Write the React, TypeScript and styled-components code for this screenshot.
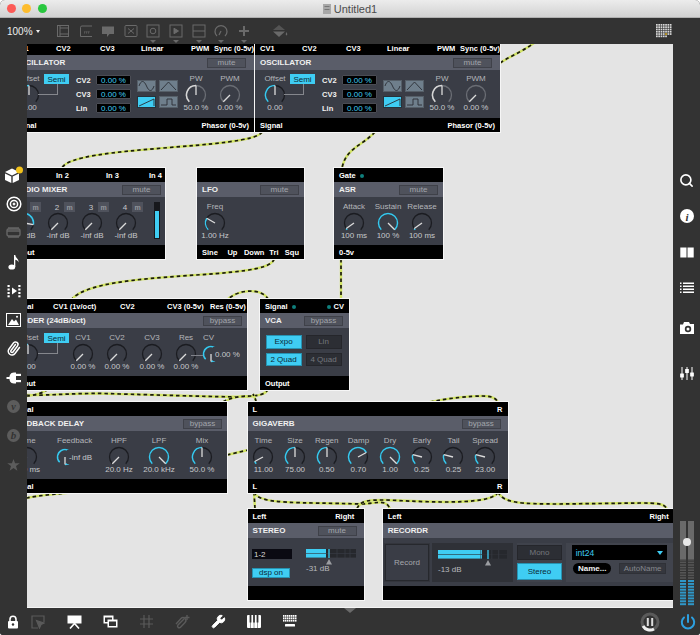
import React from "react";
import styled, { createGlobalStyle } from "styled-components";
import { Paperclip, Search, Wrench } from "lucide-react";

const GlobalStyle = createGlobalStyle`
  html, body { margin: 0; padding: 0; background: #fff; }
  body { font-family: "Liberation Sans", Arial, sans-serif; }
  * { box-sizing: border-box; }
`;

const CYAN = "#3fcdf3";
const ARC = "#38c8ee";

const Window = styled.div`
  width: 700px;
  height: 635px;
  display: flex;
  flex-direction: column;
  overflow: hidden;
  border-radius: 5px 5px 3px 3px;
  background: #333;
`;

const TitleBar = styled.div`
  height: 18px;
  flex-shrink: 0;
  display: grid;
  grid-template-columns: 1fr auto 1fr;
  align-items: center;
  background: linear-gradient(#ececec, #d2d2d2);
  border-bottom: 1px solid #b0b0b0;
`;

const Lights = styled.div`
  display: flex;
  gap: 6.5px;
  padding-left: 6.5px;
`;

const Light = styled.span<{ $c: string }>`
  width: 9px;
  height: 9px;
  border-radius: 50%;
  background: ${({ $c }) => $c};
`;

const DocName = styled.div`
  display: flex;
  align-items: center;
  gap: 3px;
  font-size: 11px;
  color: #4c4c4c;
`;

const Toolbar = styled.div`
  height: 26px;
  flex-shrink: 0;
  display: flex;
  align-items: center;
  padding-right: 27px;
  background: #333;
`;

const Zoom = styled.div`
  width: 55px;
  padding-left: 7px;
  font-size: 10px;
  color: #eee;
  display: flex;
  gap: 3px;
  align-items: center;
`;

const Caret = styled.span`
  width: 0;
  height: 0;
  border-left: 2.5px solid transparent;
  border-right: 2.5px solid transparent;
  border-top: 3.5px solid #eee;
`;

const Tool = styled.div<{ $ml?: number }>`
  width: 16px;
  margin-right: 6.6px;
  margin-left: ${({ $ml }) => $ml ?? 0}px;
  height: 16px;
  display: flex;
  align-items: center;
  justify-content: center;
`;

const MatrixTool = styled.div`
  margin-left: auto;
  display: flex;
`;

const Middle = styled.div`
  flex: 1;
  display: flex;
  min-height: 0;
`;

const LeftBar = styled.div`
  width: 27px;
  flex-shrink: 0;
  display: flex;
  flex-direction: column;
  align-items: center;
  padding-top: 116px;
`;

const SideCell = styled.div<{ $h?: number }>`
  height: ${({ $h }) => $h ?? 29}px;
  width: 100%;
  display: flex;
  align-items: center;
  justify-content: center;
  flex-shrink: 0;
`;

const RightBar = styled.div`
  width: 27px;
  flex-shrink: 0;
  display: flex;
  flex-direction: column;
  align-items: center;
  padding: 118px 0 2px;
`;

const MasterStrip = styled.div`
  margin-top: auto;
  display: flex;
`;

const Canvas = styled.div`
  flex: 1;
  position: relative;
  overflow: hidden;
  background: #e4e4e4;
  border-bottom: 1px solid #f4f4f4;
`;

const Wires = styled.svg`
  position: absolute;
  inset: 0;
`;

const BottomBar = styled.div`
  height: 27px;
  flex-shrink: 0;
  position: relative;
  display: flex;
  align-items: center;
  padding: 0 4px 0 3px;
  background: #333;
`;

const BottomTool = styled.div<{ $mr?: number }>`
  width: 20px;
  height: 20px;
  flex-shrink: 0;
  margin-right: ${({ $mr }) => $mr ?? 16}px;
  display: flex;
  align-items: center;
  justify-content: center;
`;

const Notch = styled.span`
  position: absolute;
  left: 344px;
  top: 0;
  width: 0;
  height: 0;
  border-left: 6px solid transparent;
  border-right: 6px solid transparent;
  border-top: 5px solid #6a6a6a;
`;

const Transport = styled.div`
  margin-left: auto;
  display: flex;
  align-items: center;
  gap: 20px;
`;

/* modules sit on the free canvas, $x/$y are page coordinates */
const Module = styled.div<{ $x: number; $y: number; $w: number }>`
  position: absolute;
  left: ${({ $x }) => $x - 27}px;
  top: ${({ $y }) => $y - 44}px;
  width: ${({ $w }) => $w}px;
  height: 91px;
  display: flex;
  flex-direction: column;
  background: #000;
  box-shadow: 0 0 0 1px #f6f6f6;
`;

const PortRow = styled.div<{ $cols?: string }>`
  height: 14px;
  flex-shrink: 0;
  padding: 0 5px;
  display: ${({ $cols }) => ($cols ? "grid" : "flex")};
  grid-template-columns: ${({ $cols }) => $cols ?? "none"};
  justify-content: space-between;
  align-items: center;
  background: #000;
  color: #fff;
  font-size: 7.5px;
  font-weight: bold;
  white-space: nowrap;
`;

const Led = styled.span<{ $mx?: string }>`
  display: inline-block;
  width: 4px;
  height: 4px;
  border-radius: 50%;
  background: #0f7f7c;
  margin: ${({ $mx }) => $mx ?? "0 0 0 4px"};
`;

const Head = styled.div<{ $pr?: number; $pl?: number }>`
  height: 15px;
  flex-shrink: 0;
  display: flex;
  align-items: center;
  justify-content: space-between;
  padding: 0 ${({ $pr }) => $pr ?? 5}px 0 ${({ $pl }) => $pl ?? 5}px;
  background: #5a5d69;
`;

const ModuleName = styled.span`
  color: #f0f0f0;
  font-size: 8px;
  font-weight: bold;
  white-space: nowrap;
`;

const HeadButton = styled.span`
  width: 39px;
  height: 10px;
  display: flex;
  align-items: center;
  justify-content: center;
  background: #4f525c;
  border: 1px solid #3f4149;
  color: #a2a5ab;
  font-size: 8px;
`;

const Body = styled.div<{ $pt?: number; $gap?: number }>`
  flex: 1;
  display: flex;
  align-items: flex-start;
  gap: ${({ $gap }) => $gap ?? 0}px;
  padding-top: ${({ $pt }) => $pt ?? 5}px;
  background: #3a3d46;
`;

const Cell = styled.div<{ $w: number; $ml?: number }>`
  width: ${({ $w }) => $w}px;
  flex-shrink: 0;
  margin-left: ${({ $ml }) => $ml ?? 0}px;
  display: flex;
  flex-direction: column;
  align-items: center;
  white-space: nowrap;
`;

const Label = styled.span`
  height: 10px;
  line-height: 10px;
  font-size: 8px;
  color: #b4b6ba;
`;

const Value = styled.span`
  height: 10px;
  line-height: 10px;
  margin-top: -3px;
  font-size: 8px;
  color: #c6c8cb;
`;

const KnobSvg = styled.svg`
  display: block;
  width: 22px;
  height: 22px;
  flex-shrink: 0;
`;

function polar(deg: number, r: number) {
  const t = ((deg - 90) * Math.PI) / 180;
  return `${(11 + r * Math.cos(t)).toFixed(2)} ${(11 + r * Math.sin(t)).toFixed(2)}`;
}

function arc(from: number, to: number, r: number) {
  const large = to - from > 180 ? 1 : 0;
  return `M${polar(from, r)} A${r} ${r} 0 ${large} 1 ${polar(to, r)}`;
}

type KnobProps = { a?: number; c?: string; track?: string; r?: number; needle?: string };

const Knob = ({ a = -135, c = ARC, track = "#1b1c21", r = 9.5, needle = "#dcdcdc" }: KnobProps) => (
  <KnobSvg viewBox="0 0 22 22">
    <path d={arc(-135, 135, r)} fill="none" stroke={track} strokeWidth="1.3" />
    {a > -135 && <path d={arc(-135, a, r)} fill="none" stroke={c} strokeWidth="1.5" />}
    <line x1="11" y1="11" x2={polar(a, r).split(" ")[0]} y2={polar(a, r).split(" ")[1]} stroke={needle} strokeWidth="1.3" />
  </KnobSvg>
);

const Dial = ({ label, value, w = 34, ml, ...k }: KnobProps & { label: string; value: string; w?: number; ml?: number }) => (
  <Cell $w={w} $ml={ml}>
    <Label>{label}</Label>
    <Knob {...k} />
    <Value>{value}</Value>
  </Cell>
);

const InlineCell = styled.div<{ $w: number; $line?: boolean; $pl?: number }>`
  width: ${({ $w }) => $w}px;
  flex-shrink: 0;
  position: relative;
  display: flex;
  flex-direction: column;
  white-space: nowrap;
  &::before {
    content: "";
    display: ${({ $line }) => ($line ? "block" : "none")};
    position: absolute;
    left: -9px;
    top: 22px;
    width: 12px;
    border-top: 1px solid #80828a;
  }
  ${Label} { padding-left: ${({ $pl }) => $pl ?? 0}px; }
`;

const InlineRow = styled.div`
  display: flex;
  align-items: center;
`;

const Readout = styled.span`
  margin-left: -9px;
  padding: 3px 0 0 2px;
  position: relative;
  height: 14px;
  line-height: 10px;
  background: #3a3d46;
  font-size: 8px;
  color: #c6c8cb;
`;

const SemiButton = styled.span<{ $mt?: number; $ml?: number }>`
  position: relative;
  flex-shrink: 0;
  width: 25px;
  height: 10px;
  margin-top: ${({ $mt }) => $mt ?? 0}px;
  margin-left: ${({ $ml }) => $ml ?? 0}px;
  display: flex;
  align-items: center;
  justify-content: center;
  background: ${CYAN};
  color: #0b2a36;
  font-size: 8px;
  &::after {
    content: "";
    position: absolute;
    left: -6px;
    top: 100%;
    width: 19px;
    height: 10px;
    border-right: 1px solid #85878d;
    border-bottom: 1px solid #85878d;
  }
`;

const CvTable = styled.div`
  margin: 1.5px 0 0 7px;
  display: grid;
  grid-template-columns: 20px 35px;
  grid-auto-rows: 10px;
  row-gap: 4px;
  align-items: center;
  flex-shrink: 0;
`;

const CvName = styled.span`
  color: #f2f2f2;
  font-size: 7.5px;
  font-weight: bold;
`;

const CvBox = styled.span`
  height: 10px;
  display: flex;
  align-items: center;
  justify-content: center;
  background: #000;
  border: 1px solid #4a4c54;
  border-radius: 1px;
  color: ${CYAN};
  font-size: 8px;
`;

const WaveGrid = styled.div`
  margin: 6.5px 0 0 6px;
  display: grid;
  grid-template-columns: 19px 19px;
  grid-auto-rows: 12px;
  gap: 4px 3px;
  flex-shrink: 0;
`;

const WaveButton = styled.span<{ $on?: boolean }>`
  display: block;
  background: ${({ $on }) => ($on ? CYAN : "#6f7f8c")};
  border: 1px solid ${({ $on }) => ($on ? "#26323a" : "#565f68")};
`;

const Wave = ({ d, on }: { d: string; on?: boolean }) => (
  <WaveButton $on={on}>
    <svg viewBox="0 0 17 10" width="17" height="10" style={{ display: "block" }}>
      <path d={d} fill="none" stroke="#2a2e34" strokeWidth="0.9" />
    </svg>
  </WaveButton>
);

const Oscillator = ({ x, offsetArc }: { x: number; offsetArc?: boolean }) => (
  <Module $x={x} $y={41} $w={245}>
    <PortRow $cols="42px 44px 41px 50px 23px auto">
      <span>CV1</span><span>CV2</span><span>CV3</span><span>Linear</span><span>PWM</span><span>Sync (0-5v)</span>
    </PortRow>
    <Head $pr={8}>
      <ModuleName>OSCILLATOR</ModuleName>
      <HeadButton>mute</HeadButton>
    </Head>
    <Body $pt={3.5}>
      <Dial label="Offset" value="0.00" w={30} ml={5} a={0} track={offsetArc ? "#1b1c21" : "#1b1c21"} />
      <SemiButton $mt={0.5}>Semi</SemiButton>
      <CvTable>
        <CvName>CV2</CvName><CvBox>0.00 %</CvBox>
        <CvName>CV3</CvName><CvBox>0.00 %</CvBox>
        <CvName>Lin</CvName><CvBox>0.00 %</CvBox>
      </CvTable>
      <WaveGrid>
        <Wave d="M1 5 C3 -1 6 -1 8.5 5 C11 11 14 11 16 5" />
        <Wave d="M1 9 L8.5 1 L16 9" />
        <Wave on d="M1 9 L16 2 L16 9" />
        <Wave d="M1 8 L7 8 L7 2 L12 2 L12 8 L16 8" />
      </WaveGrid>
      <Dial label="PW" value="50.0 %" ml={1} a={0} c="#d6d6d6" track="#6a6d74" />
      <Dial label="PWM" value="0.00 %" track="#6a6d74" />
    </Body>
    <PortRow>
      <span>Signal</span><span>Phasor (0-5v)</span>
    </PortRow>
  </Module>
);

const Channel = styled.div`
  width: 34px;
  flex-shrink: 0;
  display: flex;
  flex-direction: column;
  align-items: center;
  white-space: nowrap;
`;

const ChannelHead = styled.div`
  width: 100%;
  display: flex;
  align-items: center;
  gap: 3px;
  padding-left: 12px;
  height: 10px;
`;

const ChannelNumber = styled.span`
  width: 10px;
  text-align: center;
  font-size: 8px;
  color: #c6c8cb;
`;

const MuteSmall = styled.span`
  width: 11px;
  height: 10px;
  flex-shrink: 0;
  display: flex;
  align-items: center;
  justify-content: center;
  background: #4f525c;
  color: #93969c;
  font-size: 7px;
  font-weight: bold;
`;

const LevelMeter = styled.div`
  width: 6px;
  height: 37px;
  margin-left: 11px;
  flex-shrink: 0;
  display: flex;
  align-items: flex-end;
  padding: 1px;
  background: #17181c;
`;

const LevelFill = styled.span`
  display: block;
  width: 100%;
  height: 76%;
  background: ${CYAN};
`;

const ChannelStrip = ({ n, a, on }: { n: string; a: number; on?: boolean }) => (
  <Channel>
    <ChannelHead>
      <ChannelNumber>{n}</ChannelNumber>
      <MuteSmall>m</MuteSmall>
    </ChannelHead>
    <Knob a={a} c={on ? ARC : undefined} />
    <Value>-inf dB</Value>
  </Channel>
);

const VcaGrid = styled.div`
  display: grid;
  grid-template-columns: 36px 36px;
  grid-auto-rows: 13.5px;
  gap: 4px;
  padding: 2px 0 0 5.5px;
`;

const Toggle = styled.span<{ $on?: boolean }>`
  display: flex;
  align-items: center;
  justify-content: center;
  background: ${({ $on }) => ($on ? CYAN : "#2c2e34")};
  border: 1px solid ${({ $on }) => ($on ? "#2793b2" : "#25262b")};
  color: ${({ $on }) => ($on ? "#0b2a36" : "#74777d")};
  font-size: 8px;
`;

const StereoLeft = styled.div`
  display: flex;
  flex-direction: column;
  gap: 9px;
  width: 40px;
  flex-shrink: 0;
  margin-left: 4.5px;
  padding-top: 6px;
`;

const ChannelSelect = styled.span`
  height: 10px;
  display: flex;
  align-items: center;
  padding-left: 2px;
  background: #0a0a12;
  color: #d8d8d8;
  font-size: 8px;
`;

const DspButton = styled.span`
  width: 38px;
  height: 9.5px;
  display: flex;
  align-items: center;
  justify-content: center;
  background: ${CYAN};
  border: 1px solid #2793b2;
  color: #0b2a36;
  font-size: 8px;
`;

const MeterBlock = styled.div<{ $ml?: number; $pt?: number }>`
  display: flex;
  flex-direction: column;
  margin-left: ${({ $ml }) => $ml ?? 0}px;
  padding-top: ${({ $pt }) => $pt ?? 6}px;
  flex-shrink: 0;
`;

const MeterValue = styled.span`
  margin-top: -1px;
  line-height: 10px;
  font-size: 8px;
  color: #b8babd;
`;

const GainMeter = ({ w, fill, tick }: { w: number; fill: number; tick: number }) => {
  const seg = [0.62, 0.78, 0.88];
  return (
    <svg width={w} height={16} viewBox={`0 0 ${w} 16`} style={{ display: "block" }}>
      <rect x="0" y="0" width={w} height="4" fill="#26282d" />
      <rect x="0" y="4.6" width={w} height="4" fill="#26282d" />
      <rect x="0" y="0" width={fill} height="4" fill={CYAN} />
      <rect x="0" y="4.6" width={fill} height="4" fill={CYAN} />
      {seg.map((s) => (
        <line key={s} x1={w * s} x2={w * s} y1="0" y2="9" stroke="#3a3d46" strokeWidth="0.7" />
      ))}
      <line x1={tick} x2={tick} y1="-1" y2="9" stroke={CYAN} strokeWidth="1.3" />
      <path d={`M${tick} 10 L${tick + 3} 15.5 L${tick - 3} 15.5 Z`} fill="#9b9da1" />
    </svg>
  );
};

const RecordBody = styled(Body)`
  padding: 4.5px 0 0 1.3px;
  gap: 2px;
`;

const Panel = styled.div<{ $w: number; $bg?: string; $pad?: string }>`
  width: ${({ $w }) => $w}px;
  height: 39px;
  flex-shrink: 0;
  padding: ${({ $pad }) => $pad ?? "0"};
  background: ${({ $bg }) => $bg ?? "#33353c"};
`;

const RecordButton = styled.span`
  height: 100%;
  display: flex;
  align-items: center;
  justify-content: center;
  background: #3a3d46;
  border: 1px solid #26282d;
  color: #a6a8ac;
  font-size: 8px;
`;

const SourceToggle = styled(Panel)`
  display: flex;
  flex-direction: column;
  gap: 3px;
  padding: 2px 0;
  background: #3f424b;
`;

const FormatPanel = styled(Panel)`
  display: flex;
  flex-direction: column;
  gap: 3px;
  padding: 2.5px 6px 0 5.7px;
  background: #41444d;
`;

const FormatSelect = styled.span`
  height: 15px;
  display: flex;
  align-items: center;
  justify-content: space-between;
  padding: 0 4px 0 4px;
  background: #000;
  color: ${CYAN};
  font-size: 8.5px;
`;

const NameRow = styled.div`
  display: flex;
  align-items: center;
  gap: 8px;
`;

const NamePill = styled.span`
  width: 38px;
  height: 10.5px;
  margin-left: 1.5px;
  display: flex;
  align-items: center;
  justify-content: center;
  background: #000;
  border-radius: 6px;
  color: #f0f0f0;
  font-size: 8px;
  font-weight: bold;
`;

const AutoName = styled.span`
  width: 47px;
  height: 11px;
  display: flex;
  align-items: center;
  justify-content: center;
  background: #35373e;
  border: 1px solid #2f3137;
  color: #85888e;
  font-size: 8px;
`;

const Ghost = styled.text`
  font-family: "Liberation Serif", serif;
  font-style: italic;
  font-weight: bold;
`;

const wirePaths = [
  "M500 63 C512 55, 522 52, 534 43",
  "M262 132 C252 150, 72 145, 62 168",
  "M375 132 C362 146, 346 148, 342 168",
  "M341 259 L341 299",
  "M274 259 C270 282, 100 268, 72 299",
  "M225 302 C237 288, 262 288, 268 299",
  "M268 389 C264 400, 240 397, 120 394 C80 392, 50 396, 27 395",
  "M48 389 C44 393, 35 395, 27 396",
  "M223 402 C232 397, 240 396, 254 396 L253 394 C255 398, 256 400, 256 402",
  "M227 455 L248 450",
  "M75 492 C60 494, 40 495, 27 498",
  "M430 402 C450 398, 470 396, 482 396 C490 396, 495 397, 498 402",
  "M254 492 L255 509",
  "M254 492 C258 505, 300 502, 360 504 C375 504, 386 498, 390 509",
  "M498 492 C492 508, 400 500, 385 500 C370 500, 360 500, 357 509",
  "M498 492 C503 503, 520 504, 560 504 L640 503 C655 503, 664 503, 667 509",
];

const g = "#6a6a6a";

export default function App() {
  return (
    <>
      <GlobalStyle />
      <Window>
        <TitleBar>
          <Lights>
            <Light $c="#fc5b57" />
            <Light $c="#fdbc2e" />
            <Light $c="#29c73f" />
          </Lights>
          <DocName>
            <svg width="8" height="10" viewBox="0 0 8 10"><rect width="8" height="10" fill="#a8a8a8" /><rect x="1.5" y="2" width="5" height="1" fill="#777" /><rect x="1.5" y="5" width="5" height="1" fill="#777" /></svg>
            Untitled1
          </DocName>
        </TitleBar>
        <Toolbar>
          <Zoom>100%<Caret /></Zoom>
          <Tool><svg width="14" height="14" viewBox="0 0 14 14" fill="none" stroke={g}><rect x="1.5" y="1.5" width="11" height="11" /><path d="M4 1v12M4 4h9M4 10h9" /></svg></Tool>
          <Tool><svg width="14" height="14" viewBox="0 0 14 14" fill="none" stroke={g}><path d="M13 2H3Q1.5 2 1.5 3.5V12.5H13" /><path d="M5.5 9.5L6 7M7.5 9.5L8 7M9.5 9.5L10 7" strokeWidth="0.8" /></svg></Tool>
          <Tool><svg width="14" height="14" viewBox="0 0 14 14" fill={g}><path d="M1 2.5H13V10H8.5L6 13V10H1Z" /></svg></Tool>
          <Tool><svg width="14" height="14" viewBox="0 0 14 14" fill="none" stroke={g}><rect x="1" y="1.5" width="12" height="11" rx="1" /><path d="M4 4.5L10 9.5M10 4.5L4 9.5" /></svg></Tool>
          <ToolDown><svg width="14" height="14" viewBox="0 0 14 14" fill="none" stroke={g}><rect x="1" y="1" width="12" height="12" /><circle cx="7" cy="7" r="2.8" /></svg></ToolDown>
          <ToolDown><svg width="14" height="14" viewBox="0 0 14 14" fill="none" stroke={g}><rect x="1" y="1" width="12" height="12" /><path d="M5 4.2L9.5 7L5 9.8Z" fill={g} /></svg></ToolDown>
          <ToolDown><svg width="14" height="14" viewBox="0 0 14 14" fill="none" stroke={g}><rect x="1" y="1" width="12" height="12" /><path d="M1 7H13" /></svg></ToolDown>
          <ToolDown><svg width="14" height="14" viewBox="0 0 14 14" fill="none" stroke={g} strokeWidth="1.3"><path d="M3 12A6 6 0 1 1 11 12" /><path d="M7 7L5 11" /></svg></ToolDown>
          <ToolDown><svg width="14" height="14" viewBox="0 0 14 14" fill="none" stroke={g} strokeWidth="2"><path d="M7 2V12M2 7H12" /></svg></ToolDown>
          <Tool $ml={13.4}><svg width="16" height="14" viewBox="0 0 16 14" fill={g}><path d="M7 1L13 6H1Z" opacity="0.6" /><path d="M1 7.5H13L7 13Z" /><path d="M14.5 8Q16 10.5 14.5 11.5Q13 10.5 14.5 8Z" /></svg></Tool>
          <MatrixTool>
            <svg width="18" height="16" viewBox="0 0 18 16">
              {Array.from({ length: 42 }, (_, i) => {
                const cx = i % 7;
                const cy = Math.floor(i / 7);
                return <rect key={i} x={1 + cx * 2.3} y={1 + cy * 2.3} width="1.7" height="1.7" fill={cx === 4 && cy === 4 ? "#e0b020" : cy > 4 && cx > 4 ? "#333" : "#d9d9d9"} />;
              })}
            </svg>
          </MatrixTool>
        </Toolbar>
        <Middle>
          <LeftBar>
            <SideCell><svg width="22" height="20" viewBox="0 0 22 20"><path d="M2 7L9 3.5L16 7L9 10.5Z" fill="#fff" /><path d="M2 8.5L8.3 11.5V18L2 15Z" fill="#fff" /><path d="M9.7 11.5L16 8.5V15L9.7 18Z" fill="#fff" /><circle cx="16.5" cy="5" r="3.5" fill="#f2c21b" /></svg></SideCell>
            <SideCell><svg width="16" height="16" viewBox="0 0 16 16" fill="none" stroke="#fff"><circle cx="8" cy="8" r="6.8" strokeWidth="1.5" /><circle cx="8" cy="8" r="3.6" strokeWidth="1.5" /><circle cx="8" cy="8" r="1" fill="#fff" /></svg></SideCell>
            <SideCell><svg width="15" height="11" viewBox="0 0 15 11" fill="none" stroke="#666" strokeWidth="1.4"><rect x="1" y="2" width="13" height="7" rx="1.5" /><path d="M1 4H14" /><path d="M2 1H13M2 10H13" /></svg></SideCell>
            <SideCell><svg width="12" height="16" viewBox="0 0 12 16" fill="#fff"><ellipse cx="3.8" cy="13" rx="3.4" ry="2.6" /><path d="M6 13V1H7.3C7.5 4 11 4.5 10.5 8.5C10 6.5 8.5 6 7.3 5.8V13Z" /></svg></SideCell>
            <SideCell><svg width="14" height="14" viewBox="0 0 14 14" fill="#fff"><path d="M5 3.5L10 7L5 10.5Z" /><rect x="0.5" y="1" width="2.2" height="2" /><rect x="0.5" y="4.5" width="2.2" height="2" /><rect x="0.5" y="8" width="2.2" height="2" /><rect x="0.5" y="11.3" width="2.2" height="2" /><rect x="11.3" y="1" width="2.2" height="2" /><rect x="11.3" y="4.5" width="2.2" height="2" /><rect x="11.3" y="8" width="2.2" height="2" /><rect x="11.3" y="11.3" width="2.2" height="2" /></svg></SideCell>
            <SideCell><svg width="15" height="14" viewBox="0 0 15 14"><rect x="0.5" y="0.5" width="14" height="13" fill="none" stroke="#fff" /><rect x="2" y="2" width="11" height="10" fill="#333" /><path d="M2 12L6 6L8 8.5L10 6.5L13 12Z" fill="#fff" /><circle cx="11" cy="3.8" r="1" fill="#fff" /></svg></SideCell>
            <SideCell><IconTilt><Paperclip size={15} color="#fff" strokeWidth={2.4} /></IconTilt></SideCell>
            <SideCell><svg width="16" height="14" viewBox="0 0 16 14" fill="#fff"><path d="M8 1.5H10V12.5H8C4 12.5 3.5 9 3.5 8H0.5V6H3.5C3.5 5 4 1.5 8 1.5Z" /><rect x="10" y="2.8" width="5" height="2.2" /><rect x="10" y="9" width="5" height="2.2" /></svg></SideCell>
            <SideCell><svg width="13" height="13" viewBox="0 0 13 13"><circle cx="6.5" cy="6.5" r="6.5" fill="#5c5c5c" /><Ghost x="6.5" y="9.5" fontSize="10" fill="#333" textAnchor="middle">v</Ghost></svg></SideCell>
            <SideCell><svg width="13" height="13" viewBox="0 0 13 13"><circle cx="6.5" cy="6.5" r="6.5" fill="#5c5c5c" /><Ghost x="6.5" y="10" fontSize="11" fill="#333" textAnchor="middle">b</Ghost></svg></SideCell>
            <SideCell><svg width="13" height="12" viewBox="0 0 13 12" fill="#5c5c5c"><path d="M6.5 0L8.1 4.3H12.8L9 7.1L10.4 11.8L6.5 9L2.6 11.8L4 7.1L0.2 4.3H4.9Z" /></svg></SideCell>
          </LeftBar>
          <Canvas>
            <Wires width="646" height="564" viewBox="27 44 646 564">
              {wirePaths.map((d) => (
                <g key={d} fill="none">
                  <path d={d} stroke="#d3e566" strokeWidth="2.4" />
                  <path d={d} stroke="#1a1a10" strokeWidth="1.7" strokeDasharray="3.5 3" />
                </g>
              ))}
            </Wires>

            <Oscillator x={9} offsetArc />
            <Oscillator x={255} offsetArc />

            <Module $x={5} $y={168} $w={160}>
              <PortRow $cols="46px 50px 43px auto">
                <span>In 1</span><span>In 2</span><span>In 3</span><span>In 4</span>
              </PortRow>
              <Head $pr={4} $pl={9}>
                <ModuleName>AUDIO MIXER</ModuleName>
                <HeadButton>mute</HeadButton>
              </Head>
              <Body $pt={5}>
                <Spacer $w={2} />
                <ChannelStrip n="1" a={100} on />
                <ChannelStrip n="2" a={-135} />
                <ChannelStrip n="3" a={-135} />
                <ChannelStrip n="4" a={-135} />
                <LevelMeter><LevelFill /></LevelMeter>
              </Body>
              <PortRow><span>Output</span></PortRow>
            </Module>

            <Module $x={197} $y={168} $w={107}>
              <PortRow />
              <Head>
                <ModuleName>LFO</ModuleName>
                <HeadButton>mute</HeadButton>
              </Head>
              <Body>
                <Dial label="Freq" value="1.00 Hz" w={32} ml={2} a={-60} />
              </Body>
              <PortRow $cols="24px 15px 24px 14px auto">
                <span>Sine</span><span>Up</span><span>Down</span><span>Tri</span><span>Squ</span>
              </PortRow>
            </Module>

            <Module $x={334} $y={168} $w={109}>
              <PortRow><span>Gate<Led /></span></PortRow>
              <Head>
                <ModuleName>ASR</ModuleName>
                <HeadButton>mute</HeadButton>
              </Head>
              <Body>
                <Dial label="Attack" value="100 ms" ml={3} a={-125} />
                <Dial label="Sustain" value="100 %" a={135} />
                <Dial label="Release" value="100 ms" a={-125} />
              </Body>
              <PortRow><span>0-5v</span></PortRow>
            </Module>

            <Module $x={6} $y={299} $w={241}>
              <PortRow $cols="42px 67px 47px 43px auto">
                <span>Signal</span><span>CV1 (1v/oct)</span><span>CV2</span><span>CV3 (0-5v)</span><span>Res (0-5v)</span>
              </PortRow>
              <Head>
                <ModuleName>LADDER (24dB/oct)</ModuleName>
                <HeadButton>bypass</HeadButton>
              </Head>
              <Body $gap={0}>
                <Dial label="Offset" value="0.00" w={30} ml={7} a={0} />
                <SemiButton $ml={1} $mt={0}>Semi</SemiButton>
                <Dial label="CV1" value="0.00 %" w={28} />
                <Dial label="CV2" value="0.00 %" w={28} ml={6} />
                <Dial label="CV3" value="0.00 %" w={28} ml={7} />
                <Dial label="Res" value="0.00 %" w={28} ml={6} />
                <InlineCell $w={22} $line $pl={3}>
                  <Label>CV</Label>
                  <InlineRow>
                    <Knob a={180} r={7.5} />
                    <Readout>0.00 %</Readout>
                  </InlineRow>
                </InlineCell>
              </Body>
              <PortRow><span>Output</span></PortRow>
            </Module>

            <Module $x={260} $y={299} $w={89}>
              <PortRow>
                <span>Signal<Led /></span>
                <span><Led $mx="0 3px 0 0" />CV</span>
              </PortRow>
              <Head $pr={6}>
                <ModuleName>VCA</ModuleName>
                <HeadButton>bypass</HeadButton>
              </Head>
              <Body $pt={5}>
                <VcaGrid>
                  <Toggle $on>Expo</Toggle>
                  <Toggle>Lin</Toggle>
                  <Toggle $on>2 Quad</Toggle>
                  <Toggle>4 Quad</Toggle>
                </VcaGrid>
              </Body>
              <PortRow><span>Output</span></PortRow>
            </Module>

            <Module $x={6} $y={402} $w={221}>
              <PortRow><span>Signal</span></PortRow>
              <Head>
                <ModuleName>FEEDBACK DELAY</ModuleName>
                <HeadButton>bypass</HeadButton>
              </Head>
              <Body>
                <Dial label="Time" value="100 ms" w={30} ml={6} a={-100} />
                <InlineCell $w={48} style={{ marginLeft: 12 }} $pl={3}>
                  <Label>Feedback</Label>
                  <InlineRow>
                    <Knob a={180} r={7.5} />
                    <Readout>-inf dB</Readout>
                  </InlineRow>
                </InlineCell>
                <Dial label="HPF" value="20.0 Hz" a={-135} />
                <Dial label="LPF" value="20.0 kHz" ml={6} a={135} />
                <Dial label="Mix" value="50.0 %" ml={9} a={0} />
              </Body>
              <PortRow><span>Signal</span></PortRow>
            </Module>

            <Module $x={247.5} $y={402} $w={260}>
              <PortRow><span>L</span><span>R</span></PortRow>
              <Head $pr={7}>
                <ModuleName>GIGAVERB</ModuleName>
                <HeadButton>bypass</HeadButton>
              </Head>
              <Body>
                <Dial label="Time" value="11.00" w={31.7} a={-118} />
                <Dial label="Size" value="75.00" w={31.7} a={0} />
                <Dial label="Regen" value="0.50" w={31.7} a={0} />
                <Dial label="Damp" value="0.70" w={31.7} a={62} />
                <Dial label="Dry" value="1.00" w={31.7} a={135} />
                <Dial label="Early" value="0.25" w={31.7} a={-76} />
                <Dial label="Tail" value="0.25" w={31.7} a={-76} />
                <Dial label="Spread" value="23.00" w={31.7} a={-76} />
              </Body>
              <PortRow><span>L</span><span>R</span></PortRow>
            </Module>

            <Module $x={247.5} $y={509} $w={116}>
              <PortRow><span>Left</span><span>Right&nbsp;&nbsp;</span></PortRow>
              <Head $pr={7}>
                <ModuleName>STEREO</ModuleName>
                <HeadButton>mute</HeadButton>
              </Head>
              <Body $pt={5}>
                <StereoLeft>
                  <ChannelSelect>1-2</ChannelSelect>
                  <DspButton>dsp on</DspButton>
                </StereoLeft>
                <MeterBlock $ml={14}>
                  <GainMeter w={50} fill={20} tick={23} />
                  <MeterValue>-31 dB</MeterValue>
                </MeterBlock>
              </Body>
              <PortRow />
            </Module>

            <Module $x={382.7} $y={509} $w={291}>
              <PortRow><span>Left</span><span>Right</span></PortRow>
              <Head><ModuleName>RECORDR</ModuleName></Head>
              <RecordBody>
                <Panel $w={46} $pad="1px"><RecordButton>Record</RecordButton></Panel>
                <Panel $w={81} $bg="#2f3137" $pad="0 0 0 6px">
                  <MeterBlock $pt={7}>
                    <GainMeter w={69} fill={44} tick={50} />
                    <MeterValue>-13 dB</MeterValue>
                  </MeterBlock>
                </Panel>
                <SourceToggle $w={45} style={{ marginLeft: 2 }}>
                  <Toggle style={{ height: 16 }}>Mono</Toggle>
                  <Toggle style={{ height: 17 }} $on>Stereo</Toggle>
                </SourceToggle>
                <FormatPanel $w={107} style={{ marginLeft: 2 }}>
                  <FormatSelect>
                    int24
                    <svg width="6" height="4" viewBox="0 0 6 4" fill={CYAN}><path d="M0 0H6L3 4Z" /></svg>
                  </FormatSelect>
                  <NameRow>
                    <NamePill>Name...</NamePill>
                    <AutoName>AutoName</AutoName>
                  </NameRow>
                </FormatPanel>
              </RecordBody>
              <PortRow />
            </Module>
          </Canvas>
          <RightBar>
            <SideCell $h={36}><Search size={15} color="#fff" strokeWidth={2.6} /></SideCell>
            <SideCell $h={36}><svg width="14" height="14" viewBox="0 0 14 14"><circle cx="7" cy="7" r="7" fill="#fff" /><Ghost x="7" y="11.5" fontSize="11" fill="#333" textAnchor="middle">i</Ghost></svg></SideCell>
            <SideCell $h={36}><svg width="14" height="11" viewBox="0 0 14 11" fill="#fff"><rect x="0.3" y="0.5" width="6.2" height="10" /><rect x="7.5" y="0.5" width="6.2" height="10" /></svg></SideCell>
            <SideCell $h={36}><svg width="14" height="13" viewBox="0 0 14 13" fill="#fff"><rect x="0" y="0.5" width="1.5" height="1.5" /><rect x="0" y="3.5" width="1.5" height="1.5" /><rect x="0" y="6.5" width="1.5" height="1.5" /><rect x="0" y="9.5" width="1.5" height="1.5" /><rect x="3" y="0.5" width="11" height="1.5" /><rect x="3" y="3.5" width="11" height="1.5" /><rect x="3" y="6.5" width="11" height="1.5" /><rect x="3" y="9.5" width="11" height="1.5" /></svg></SideCell>
            <SideCell $h={44}><svg width="14" height="14" viewBox="0 0 14 14"><path d="M0 3.5H3L4 1H9L10 3H14V13H0Z" fill="#fff" /><circle cx="8" cy="8" r="3.2" fill="#333" /><circle cx="8" cy="8" r="1.5" fill="#fff" /></svg></SideCell>
            <SideCell $h={46}><svg width="14" height="13" viewBox="0 0 14 13" fill="#fff" stroke="#fff"><path d="M2 0V13M7 0V13M12 0V13" strokeWidth="1" /><rect x="0.7" y="7" width="2.6" height="3" /><rect x="5.7" y="2.5" width="2.6" height="3" /><rect x="10.7" y="6" width="2.6" height="3" /></svg></SideCell>
            <MasterStrip>
              <svg width="16" height="85" viewBox="0 0 16 85">
                {[1, 9].map((x) => (
                  <g key={x}>
                    <rect x={x} y="0" width="6" height="38" fill="#6a6a6a" />
                    {Array.from({ length: 8 }, (_, i) => (
                      <rect key={i} x={x} y={38 + i * 2.6} width="6" height="1.6" fill="#555" />
                    ))}
                    {Array.from({ length: 9 }, (_, i) => (
                      <rect key={i} x={x} y={59 + i * 2.9} width="6" height="2" fill="#2f97c8" />
                    ))}
                  </g>
                ))}
                <circle cx="8" cy="21" r="4" fill="#e8e8e8" />
              </svg>
            </MasterStrip>
          </RightBar>
        </Middle>
        <BottomBar>
          <BottomTool $mr={5}><svg width="12" height="14" viewBox="0 0 12 14"><path d="M3 6.5V4.2A3 3 0 0 1 9 4.2V6.5" fill="none" stroke="#fff" strokeWidth="1.6" /><rect x="1" y="6" width="10" height="7.5" rx="1" fill="#fff" /><circle cx="6" cy="9.5" r="1.2" fill="#333" /></svg></BottomTool>
          <BottomTool><svg width="14" height="14" viewBox="0 0 14 14" fill="none" stroke="#5a5a5a" strokeWidth="1.2"><path d="M13 7V1H1V13H7" /><path d="M5.5 5.5L13 8L10 9.5L8.5 13Z" fill="#5a5a5a" /></svg></BottomTool>
          <BottomTool><svg width="15" height="14" viewBox="0 0 15 14" fill="#fff"><rect x="0.5" y="0.5" width="14" height="8" /><path d="M3 13.5L7.5 8.5L12 13.5" fill="none" stroke="#fff" strokeWidth="1.6" /></svg></BottomTool>
          <BottomTool><svg width="15" height="13" viewBox="0 0 15 13"><rect x="0.5" y="0.5" width="10" height="8" fill="#fff" /><rect x="2" y="2.5" width="7" height="4.5" fill="#333" /><rect x="4.5" y="4.5" width="10" height="8" fill="#fff" /><rect x="6" y="6.5" width="7" height="4.5" fill="#333" /></svg></BottomTool>
          <BottomTool><svg width="13" height="13" viewBox="0 0 13 13" stroke="#5a5a5a" strokeWidth="1.2"><path d="M4 0V13M9 0V13M0 4H13M0 9H13" /></svg></BottomTool>
          <BottomTool><svg width="16" height="15" viewBox="0 0 16 15" fill="none" stroke="#5a5a5a" strokeWidth="1.4"><path d="M10 5L4 11A1.6 1.6 0 0 0 6.5 13.2L11 8.5A2.8 2.8 0 0 0 7 4.5L2 10" /><path d="M13 1V6M10.5 3.5H15.5" /></svg></BottomTool>
          <BottomTool><Wrench size={15} color="#fff" fill="#fff" strokeWidth={1.6} /></BottomTool>
          <BottomTool><svg width="14" height="13" viewBox="0 0 14 13"><rect x="0" y="0" width="14" height="13" rx="1" fill="#fff" /><rect x="2.6" y="0" width="1.8" height="7.5" fill="#333" /><rect x="6.1" y="0" width="1.8" height="7.5" fill="#333" /><rect x="9.6" y="0" width="1.8" height="7.5" fill="#333" /><path d="M3.5 7V13M7 7V13M10.5 7V13" stroke="#333" strokeWidth="0.5" /></svg></BottomTool>
          <BottomTool $mr={0}><svg width="14" height="13" viewBox="0 0 14 13" fill="#fff">{[0, 1, 2].map((r) => Array.from({ length: 7 }, (_, i) => <rect key={`${r}${i}`} x={i * 2} y={r * 2.4} width="1.5" height="1.8" />))}<rect x="2" y="9" width="10" height="2.6" rx="0.5" /></svg></BottomTool>
          <Notch />
          <Transport>
            <svg width="20" height="20" viewBox="0 0 20 20" fill="none">
              <circle cx="10" cy="10" r="8" stroke="#5a5a5a" strokeWidth="3" />
              <path d="M3 14A8 8 0 0 0 14 17" stroke="#eee" strokeWidth="3" />
              <rect x="6.8" y="6" width="2" height="8" fill="#ddd" />
              <rect x="11.2" y="6" width="2" height="8" fill="#ddd" />
            </svg>
            <svg width="16" height="18" viewBox="0 0 16 18" fill="none" stroke="#2d9fdf" strokeWidth="2" strokeLinecap="round">
              <path d="M8 2V9" />
              <path d="M4 4.5A6.2 6.2 0 1 0 12 4.5" />
            </svg>
          </Transport>
        </BottomBar>
      </Window>
    </>
  );
}

const ToolDown = ({ children }: { children: React.ReactNode }) => (
  <ToolStack>
    {children}
    <ToolCaret />
  </ToolStack>
);

const ToolStack = styled(Tool)`
  position: relative;
`;

const ToolCaret = styled.span`
  position: absolute;
  left: 5px;
  bottom: -4px;
  width: 0;
  height: 0;
  border-left: 3px solid transparent;
  border-right: 3px solid transparent;
  border-top: 3px solid #6a6a6a;
`;

const IconTilt = styled.span`
  display: flex;
  transform: rotate(-8deg);
`;

const Spacer = styled.span<{ $w: number }>`
  width: ${({ $w }) => $w}px;
  flex-shrink: 0;
`;
